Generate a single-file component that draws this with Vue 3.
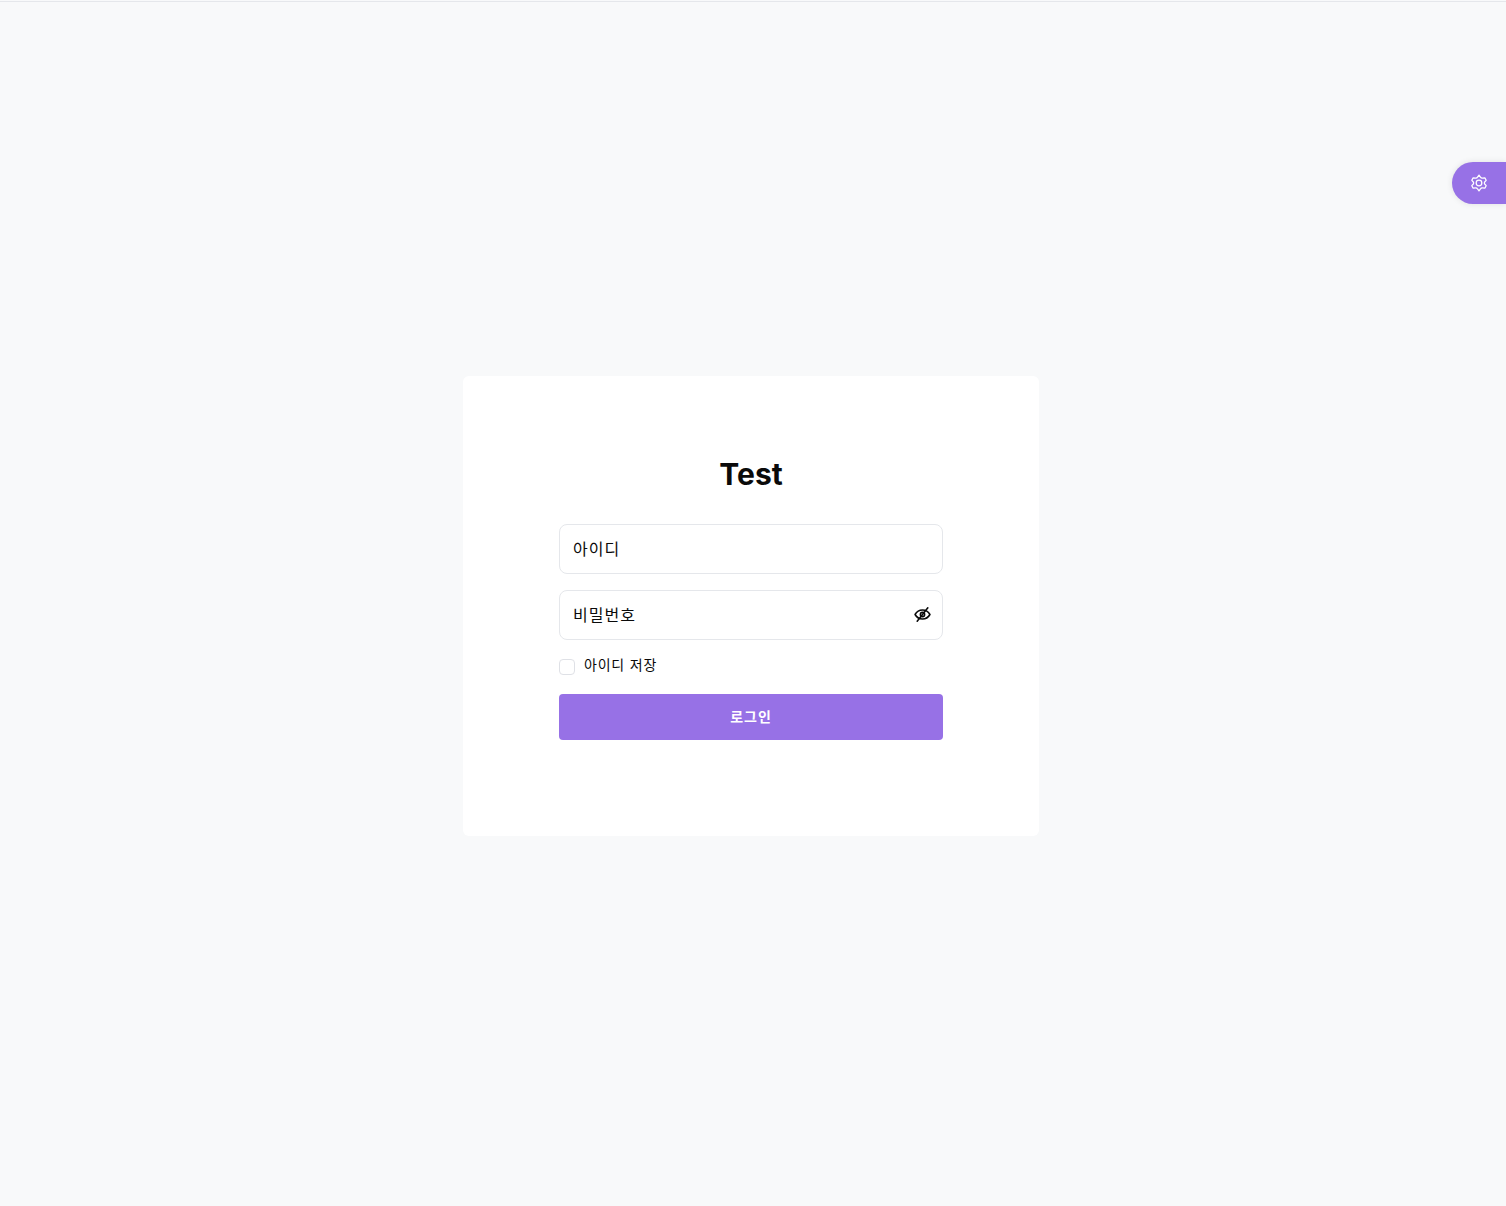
<template>
  <div class="page">
    <div class="top-line"></div>
    <main class="main">
      <div class="card">
        <form class="login-form" @submit.prevent>
          <h1 class="title">Test</h1>
          <div class="field">
            <input class="input" type="text" placeholder="아이디" />
          </div>
          <div class="field">
            <input class="input" type="password" placeholder="비밀번호" />
            <button class="eye" type="button" aria-label="비밀번호 보기">
              <svg width="17" height="17" viewBox="0 0 24 24" fill="none" stroke="currentColor" stroke-width="2.2" stroke-linecap="round" stroke-linejoin="round">
                <path d="M1.500 12c2.500-4.400 6-6.400 10.500-6.400s8 2 10.500 6.400c-2.500 4.400-6 6.400-10.500 6.400S4 16.400 1.500 12Z" />
                <circle cx="12" cy="12" r="3" />
                <path d="M19.500 2.500 4.500 21.500" />
              </svg>
            </button>
          </div>
          <label class="remember">
            <input class="check" type="checkbox" />
            <span>아이디 저장</span>
          </label>
          <button class="submit" type="submit"><span>로그인</span></button>
        </form>
      </div>
    </main>
    <button class="settings" type="button" aria-label="설정">
      <svg width="20" height="20" viewBox="0 0 24 24" fill="none" stroke="currentColor" stroke-width="1.500" stroke-linecap="round" stroke-linejoin="round">
        <path d="M12 2.500 14 5.300a2 2 0 0 0 1.800.9l3.400-.3 1.400 2.900-2 2.300a2 2 0 0 0 0 1.800l2 2.300-1.400 2.900-3.400-.3a2 2 0 0 0-1.800.9L12 21.500l-2-2.800a2 2 0 0 0-1.800-.9l-3.400.3-1.400-2.900 2-2.300a2 2 0 0 0 0-1.800l-2-2.300 1.400-2.900 3.400.3A2 2 0 0 0 10 5.300Z" />
        <circle cx="12" cy="12" r="3.400" />
      </svg>
    </button>
  </div>
</template>

<script setup>
</script>

<style>
html,
body {
  margin: 0;
  background: #f8f9fa;
}
</style>

<style scoped>
.page {
  position: relative;
  height: 1206px;
  display: flex;
  flex-direction: column;
  background: #f8f9fa;
  overflow: hidden;
  font-family: Inter, "Noto Sans CJK KR", sans-serif;
  color: #0a0a0a;
}

.top-line {
  flex: none;
  height: 1px;
  margin-top: 1px;
  background: #e5e7eb;
}

.main {
  flex: 1;
  display: flex;
  align-items: center;
  justify-content: center;
  padding: 4px 4px 0 0;
}

.card {
  box-sizing: border-box;
  width: 576px;
  height: 460px;
  padding: 80px 96px;
  background: #fff;
  border-radius: 6px;
}

.login-form {
  display: flex;
  flex-direction: column;
}

.title {
  margin: 0 0 32px;
  font-size: 30px;
  line-height: 36px;
  font-weight: 700;
  text-align: center;
  color: #0a0a0a;
}

.field {
  position: relative;
  margin-bottom: 16px;
}

.input {
  display: block;
  box-sizing: border-box;
  width: 100%;
  height: 50px;
  padding: 0 13px;
  border: 1px solid #e5e7eb;
  border-radius: 8px;
  outline: none;
  background: #fff;
  font-family: inherit;
  font-size: 16px;
  letter-spacing: 1px;
  color: #0a0a0a;
}

.input::placeholder {
  color: #0a0a0a;
  opacity: 1;
}

.eye {
  position: absolute;
  top: 16px;
  right: 12px;
  display: flex;
  padding: 0;
  border: 0;
  background: none;
  color: #0a0a0a;
}

.remember {
  display: flex;
  align-items: center;
  gap: 9px;
  height: 20px;
  margin: 1px 0 17px;
  font-size: 14px;
  line-height: 20px;
  letter-spacing: 0.8px;
}

.remember span {
  position: relative;
  top: -2px;
}

.check {
  appearance: none;
  box-sizing: border-box;
  width: 16px;
  height: 16px;
  margin: 0;
  border: 1px solid #dfe1e6;
  border-radius: 4px;
  background: #fff;
}

.submit {
  height: 46px;
  padding: 0;
  border: 0;
  border-radius: 4px;
  background: #9771e6;
  color: #fff;
  font-family: inherit;
  font-size: 14px;
  font-weight: 600;
  letter-spacing: 1px;
}

.submit span {
  position: relative;
  top: -1px;
}

.settings {
  position: absolute;
  top: 162px;
  right: 0;
  display: flex;
  align-items: center;
  width: 54px;
  height: 42px;
  padding: 0 0 0 17px;
  border: 0;
  border-radius: 21px 0 0 21px;
  background: #9771e6;
  color: #fff;
  box-shadow: 0 0 6px rgba(0, 0, 0, 0.1);
}
</style>
